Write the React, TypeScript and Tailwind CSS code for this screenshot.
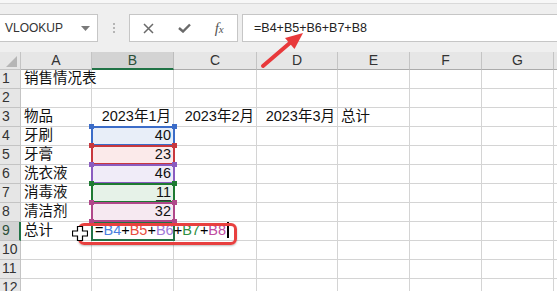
import React from "react";

const FONT = '"Liberation Sans", "Noto Sans CJK SC", sans-serif';

const ranges: Record<number, { value: string; border: string; fill: string; handle: string }> = {
  4: { value: "40", border: "border-[#3b6cc8]", fill: "bg-[#e8eef8]", handle: "bg-[#3b6cc8]" },
  5: { value: "23", border: "border-[#c8383e]", fill: "bg-[#fbeaea]", handle: "bg-[#c8383e]" },
  6: { value: "46", border: "border-[#8a5cc0]", fill: "bg-[#f0ecf8]", handle: "bg-[#8a5cc0]" },
  7: { value: "11", border: "border-[#1e7a32]", fill: "bg-[#e6f2e8]", handle: "bg-[#1e7a32]" },
  8: { value: "32", border: "border-[#b0478a]", fill: "bg-[#f6e9f1]", handle: "bg-[#b0478a]" },
};

const names: Record<number, string> = {
  1: "销售情况表",
  3: "物品",
  4: "牙刷",
  5: "牙膏",
  6: "洗衣液",
  7: "消毒液",
  8: "清洁剂",
  9: "总计",
};

const letters = ["A", "B", "C", "D", "E", "F", "G", ""];

function RangeCell({ row }: { row: number }) {
  const r = ranges[row];
  return (
    <div className={`relative border-r border-b border-[#d4d4d4] ${r.fill} flex items-end justify-end pr-[2px] pb-[1px]`}>
      <span className={row === 7 ? "underline underline-offset-[3px] decoration-[#333]" : ""}>{r.value}</span>
      <div className={`absolute z-10 -left-[1px] -top-[1px] -right-[2px] -bottom-[1px] border-2 ${r.border}`}>
        <div className={`absolute -left-[4px] -top-[4px] w-[5px] h-[5px] ${r.handle}`} />
        <div className={`absolute -right-[4px] -top-[4px] w-[5px] h-[5px] ${r.handle}`} />
        <div className={`absolute -left-[4px] -bottom-[4px] w-[5px] h-[5px] ${r.handle}`} />
        <div className={`absolute -right-[4px] -bottom-[4px] w-[5px] h-[5px] ${r.handle}`} />
      </div>
    </div>
  );
}

function EditCell() {
  return (
    <div className="relative border-r border-b border-[#d4d4d4] flex items-end pl-[3px] pb-[1px] whitespace-nowrap">
      <div className="absolute -left-[1px] -top-[1px] -right-[2px] -bottom-[1px] border-2 border-[#217346]" />
      <span className="relative">
        <span className="text-black">=</span>
        <span className="text-[#4a7fe0]">B4</span>
        <span className="text-black">+</span>
        <span className="text-[#e84c3d]">B5</span>
        <span className="text-black">+</span>
        <span className="text-[#a07ad8]">B6</span>
        <span className="text-black">+</span>
        <span className="text-[#2f8f3f]">B7</span>
        <span className="text-black">+</span>
        <span className="text-[#c04aa0]">B8</span>
        <span className="inline-block align-[-3px] w-[1.5px] h-[16px] bg-black ml-[1px]" />
      </span>
    </div>
  );
}

function Cell({ text, align = "left" }: { text?: string; align?: "left" | "right" }) {
  return (
    <div
      className={`border-r border-b border-[#d4d4d4] flex items-end pb-[1px] whitespace-nowrap ${
        align === "right" ? "justify-end pr-[2px]" : "pl-[3px]"
      }`}
    >
      {text}
    </div>
  );
}

export default function App() {
  const rows = Array.from({ length: 12 }, (_, i) => i + 1);

  return (
    <div className="relative w-[557px] h-[291px] overflow-hidden bg-white" style={{ fontFamily: FONT }}>
      {/* formula bar */}
      <div className="h-[52px] bg-[#efefef] flex flex-col">
        <div className="h-[4px] bg-[#f7f7f7] border-b border-[#d9d9d9]" />
        <div className="flex items-stretch mt-[10px] h-[28px]">
          <div className="w-[98px] bg-white border border-l-0 border-[#c6c6c6] flex items-center justify-between pl-[5px] pr-[7px]">
            <span className="text-[12px] text-[#333]">VLOOKUP</span>
            <svg width="9" height="5" viewBox="0 0 9 5">
              <polygon points="0,0 9,0 4.5,5" fill="#7a7a7a" />
            </svg>
          </div>
          <div className="w-[31px] flex flex-col items-center justify-center gap-[2px]">
            <div className="w-[2px] h-[2px] bg-[#b5b5b5]" />
            <div className="w-[2px] h-[2px] bg-[#b5b5b5]" />
            <div className="w-[2px] h-[2px] bg-[#b5b5b5]" />
          </div>
          <div className="w-[109px] bg-white border border-[#c6c6c6] flex items-center">
            <div className="w-[38px] flex justify-center">
              <svg width="11" height="11" viewBox="0 0 11 11">
                <path d="M1 1 L10 10 M10 1 L1 10" stroke="#6a6a6a" strokeWidth="1.5" />
              </svg>
            </div>
            <div className="w-[34px] flex justify-center">
              <svg width="13" height="10" viewBox="0 0 13 10">
                <path d="M1 5 L5 8.5 L12 1.5" stroke="#6a6a6a" strokeWidth="2.4" fill="none" />
              </svg>
            </div>
            <div className="w-[36px] flex justify-center items-baseline text-[#555]" style={{ fontFamily: '"Liberation Serif", serif' }}>
              <span className="italic text-[15px]">f</span>
              <span className="italic text-[11px]">x</span>
            </div>
          </div>
          <div className="ml-[4px] flex-1 bg-white border border-r-0 border-[#c6c6c6] flex items-center pl-[11px]">
            <span className="text-[12.5px] text-[#222]" style={{ fontFamily: '"Liberation Sans", sans-serif' }}>
              =B4+B5+B6+B7+B8
            </span>
          </div>
        </div>
      </div>

      {/* sheet grid */}
      <div className="grid grid-cols-[21px_71px_82px_83px_81px_72px_72px_72px_72px] grid-rows-[18px_repeat(12,19px)] text-[14.5px] leading-[17px] text-[#111]">
        <div className="bg-[#e6e6e6] border-r border-b border-[#c4c4c4] flex items-end justify-end pr-[3px] pb-[2px]">
          <svg width="11" height="11" viewBox="0 0 11 11">
            <polygon points="11,0 11,11 0,11" fill="#b6b6b6" />
          </svg>
        </div>
        {letters.map((l, i) =>
          l === "B" ? (
            <div
              key={i}
              className="bg-[#d3d3d3] border-r border-b-2 border-r-[#bdbdbd] border-b-[#217346] flex items-center justify-center text-[14px] text-[#2b4f38]"
              style={{ fontFamily: '"Liberation Sans", sans-serif' }}
            >
              {l}
            </div>
          ) : (
            <div
              key={i}
              className="bg-[#e6e6e6] border-r border-b border-r-[#c4c4c4] border-b-[#ababab] flex items-center justify-center text-[14px] text-[#333]"
              style={{ fontFamily: '"Liberation Sans", sans-serif' }}
            >
              {l}
            </div>
          )
        )}

        {rows.map((row) => (
          <React.Fragment key={row}>
            {row === 9 ? (
              <div className="bg-[#d3d3d3] border-r-2 border-b border-r-[#217346] border-b-[#c4c4c4] flex items-end pl-[2px] pb-[1px] text-[14px] text-[#2b4f38]" style={{ fontFamily: '"Liberation Sans", sans-serif' }}>
                {row}
              </div>
            ) : (
              <div className="bg-[#e6e6e6] border-r border-b border-[#c4c4c4] flex items-end pl-[2px] pb-[1px] text-[14px] text-[#333]" style={{ fontFamily: '"Liberation Sans", sans-serif' }}>
                {row}
              </div>
            )}
            <Cell text={names[row]} />
            {ranges[row] ? <RangeCell row={row} /> : row === 9 ? <EditCell /> : <Cell text={row === 3 ? "2023年1月" : undefined} align="right" />}
            <Cell text={row === 3 ? "2023年2月" : undefined} align="right" />
            <Cell text={row === 3 ? "2023年3月" : undefined} align="right" />
            <Cell text={row === 3 ? "总计" : undefined} />
            <Cell />
            <Cell />
            <Cell />
          </React.Fragment>
        ))}
      </div>

      {/* annotation: red box around formula */}
      <div className="absolute left-[78px] top-[223px] w-[159px] h-[22px] border-[3px] border-[#e8403f] rounded-[6px] z-20 shadow-[0_1px_2px_rgba(0,0,0,0.25)]" />

      {/* select cursor */}
      <svg className="absolute left-[72px] top-[226px] z-20" width="16" height="15" viewBox="0 0 16 15">
        <polygon
          points="5.5,0.5 10.5,0.5 10.5,5 15.5,5 15.5,10 10.5,10 10.5,14.5 5.5,14.5 5.5,10 0.5,10 0.5,5 5.5,5"
          fill="white"
          stroke="black"
          strokeWidth="1.2"
        />
      </svg>

      {/* annotation: arrow */}
      <svg className="absolute left-0 top-0 z-20 pointer-events-none" width="557" height="291">
        <line x1="263" y1="66" x2="291" y2="42" stroke="#e8393b" strokeWidth="4" strokeLinecap="round" />
        <polygon points="303,33 294.5,49 285,38" fill="#e8393b" />
      </svg>
    </div>
  );
}
